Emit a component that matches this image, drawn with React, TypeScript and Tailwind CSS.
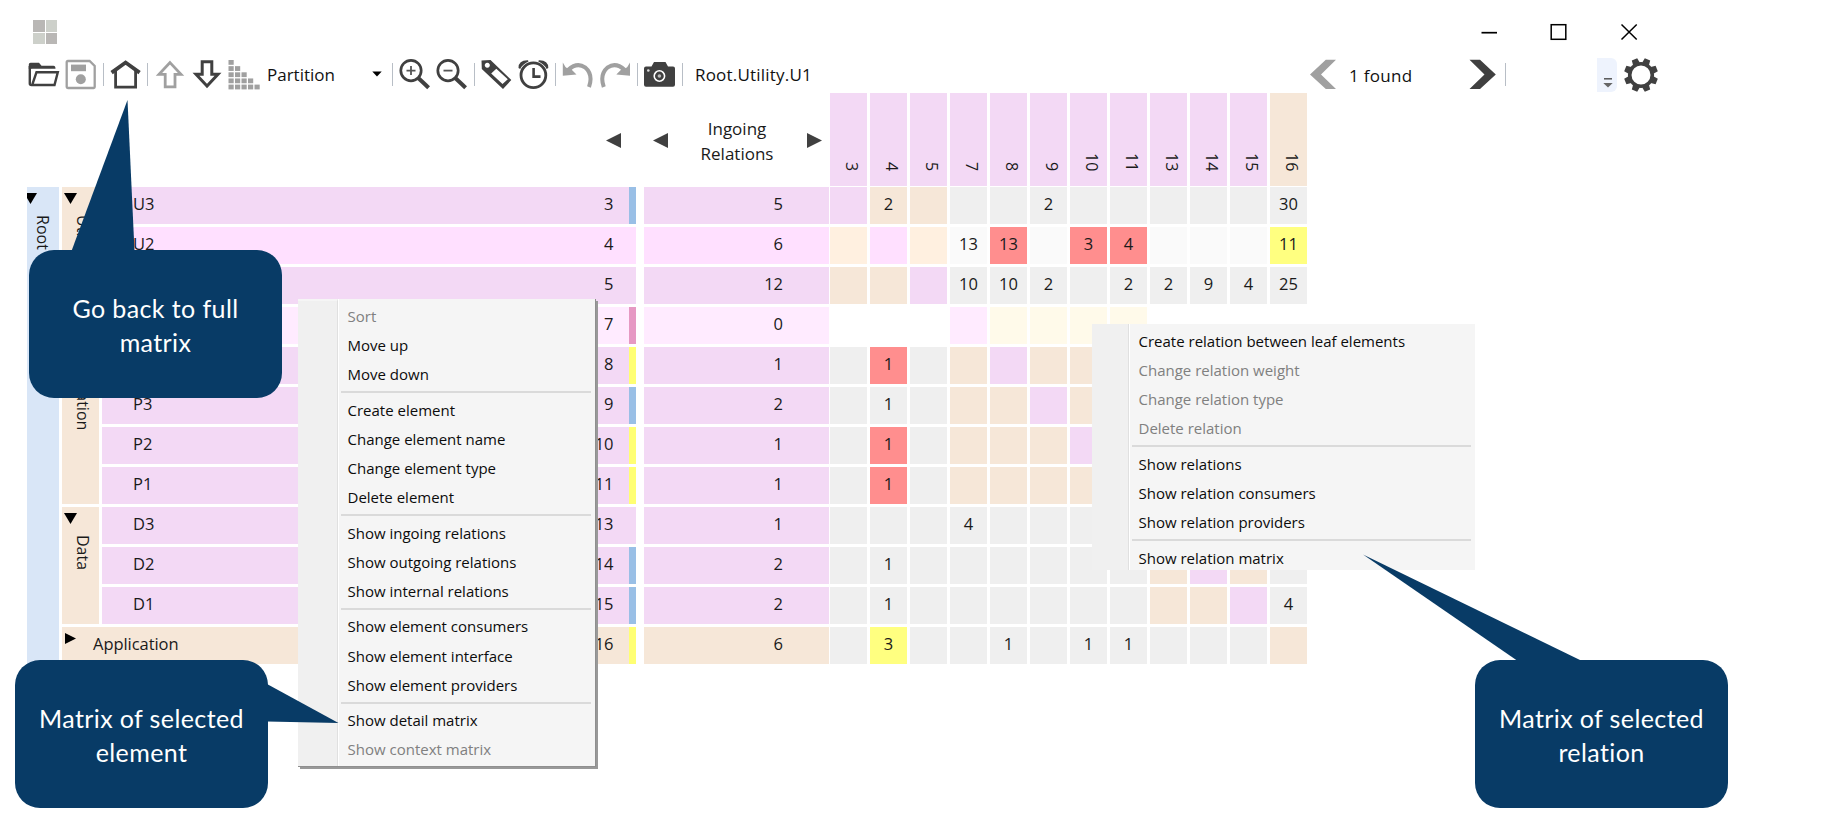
import type { ReactNode } from "react";
import clsx from "clsx";

const DARK = "#404040";
const DIM = "#a0a0a0";

const CELL: Record<string, string> = {
  p: "bg-[#f3d9f5]",
  b: "bg-[#f6e7d8]",
  g: "bg-[#efefef]",
  l: "bg-[#fafafa]",
  o: "bg-[#fff0e0]",
  m: "bg-[#ffe0ff]",
  k: "bg-[#ffebff]",
  c: "bg-[#fffaea]",
  w: "bg-white",
  r: "bg-[#ff8e8e]",
  y: "bg-[#ffff80]",
};

const MARK: Record<string, string> = {
  blue: "bg-[#99bfe6]",
  pink: "bg-[#e699c3]",
  yellow: "bg-[#ffff73]",
};

type Row = {
  name?: string;
  index: number;
  metric: number;
  tone: string;
  mark?: string;
  cells: string;
  values: Record<number, number>;
};

const COLUMNS = [3, 4, 5, 7, 8, 9, 10, 11, 13, 14, 15, 16];

const ROWS: Row[] = [
  { name: "U3", index: 3, metric: 5, tone: "p", mark: "blue", cells: "pbbggggggggg", values: { 4: 2, 9: 2, 16: 30 } },
  { name: "U2", index: 4, metric: 6, tone: "m", cells: "omolrlrrllly", values: { 7: 13, 8: 13, 10: 3, 11: 4, 16: 11 } },
  { index: 5, metric: 12, tone: "p", cells: "bbpggggggggg", values: { 7: 10, 8: 10, 9: 2, 11: 2, 13: 2, 14: 9, 15: 4, 16: 25 } },
  { index: 7, metric: 0, tone: "k", mark: "pink", cells: "wwwkccccwwww", values: {} },
  { index: 8, metric: 1, tone: "p", mark: "yellow", cells: "grgbpbbbgggg", values: { 4: 1 } },
  { name: "P3", index: 9, metric: 2, tone: "p", mark: "blue", cells: "gggbbpbbgggg", values: { 4: 1 } },
  { name: "P2", index: 10, metric: 1, tone: "p", mark: "yellow", cells: "grgbbbpbgggg", values: { 4: 1 } },
  { name: "P1", index: 11, metric: 1, tone: "p", mark: "yellow", cells: "grgbbbbpgggg", values: { 4: 1 } },
  { name: "D3", index: 13, metric: 1, tone: "p", cells: "ggggggggpbbg", values: { 7: 4 } },
  { name: "D2", index: 14, metric: 2, tone: "p", mark: "blue", cells: "ggggggggbpbg", values: { 4: 1, 16: 9 } },
  { name: "D1", index: 15, metric: 2, tone: "p", mark: "blue", cells: "ggggggggbbpg", values: { 4: 1, 16: 4 } },
  { name: "Application", index: 16, metric: 6, tone: "b", mark: "yellow", cells: "gygggggggggb", values: { 4: 3, 8: 1, 10: 1, 11: 1 } },
];

function Glyph({ className, children }: { className?: string; children: ReactNode }) {
  return (
    <svg viewBox="0 0 32 32" fill="none" className={clsx("size-8 shrink-0", className)}>
      {children}
    </svg>
  );
}

function Divider({ className }: { className: string }) {
  return <div className={clsx("h-[23px] w-px shrink-0 bg-[#b8bec6]", className)} />;
}

function TitleBar() {
  return (
    <div className="flex h-[58px] items-start">
      <div className="mt-5 ml-[33px] grid size-6 grid-cols-2 gap-px">
        <div className="bg-[#b9b7b5]" />
        <div className="bg-[#cdd0ca]" />
        <div className="bg-[#cdd0ca]" />
        <div className="bg-[#b9b7b5]" />
      </div>
      <svg viewBox="0 0 160 18" fill="none" stroke="#000" className="mt-[23px] ml-[1423px] h-[18px] w-[160px]">
        <path d="M1.5 9.7H17" strokeWidth="1.7" />
        <rect x="71.2" y="1.7" width="14.6" height="14.6" strokeWidth="1.5" />
        <path d="M141.5 1.5L156.7 16.5M156.7 1.5L141.5 16.5" strokeWidth="1.5" />
      </svg>
    </div>
  );
}

function ZoomGlyph({ plus, className }: { plus?: boolean; className: string }) {
  return (
    <Glyph className={className}>
      <circle cx="12" cy="12.6" r="10.2" stroke={DARK} strokeWidth="2.7" />
      <path d="M19.3 20L29.6 29.8" stroke={DARK} strokeWidth="4" />
      <path d={plus ? "M7.5 12.6H16.5M12 8.1V17.1" : "M7.5 12.6H16.5"} stroke="#555" strokeWidth="1.8" />
    </Glyph>
  );
}

function Toolbar() {
  const teeth = [22.5, 67.5, 112.5, 157.5, 202.5, 247.5, 292.5, 337.5];
  return (
    <div className="flex h-[35px] items-start text-[17px] leading-[34px] text-[#111]">
      <Glyph className="ml-7">
        <path d="M0.8 11V6.6Q0.8 4.8 2.6 4.8H11L13.5 7.7H25.5Q27.5 7.7 27.5 10.8H5Z" fill={DARK} />
        <path d="M1.8 8V25.5Q1.8 27 3.5 27H26.5L29.8 14.2H8.5L4.5 26" stroke={DARK} strokeWidth="2.4" />
      </Glyph>
      <Glyph className="ml-[5px]">
        <path d="M1.7 4.2Q1.7 3 2.9 3H24.6L29.7 8V29Q29.7 30 28.7 30H2.9Q1.7 30 1.7 29Z" stroke={DIM} strokeWidth="2.3" />
        <rect x="6" y="6.6" width="15" height="6.6" fill={DIM} />
        <circle cx="15.8" cy="21.3" r="5" fill={DIM} />
      </Glyph>
      <Divider className="mt-[5px] ml-[6px]" />
      <Glyph className="ml-[6px]">
        <path d="M1.6 14.6L15.6 4.5L29.6 14.6" stroke={DARK} strokeWidth="3.8" />
        <path d="M5.6 13V29.2H25.6V13" stroke={DARK} strokeWidth="2.8" />
      </Glyph>
      <Divider className="mt-[5px] ml-[5px]" />
      <Glyph className="ml-[7px]">
        <path d="M15 4.6L26 16.3H20V28.9H10.2V16.3H4Z" stroke={DIM} strokeWidth="2.8" />
      </Glyph>
      <Glyph className="ml-[5px]">
        <path d="M15 28L4 16.3H10.2V3.7H19.8V16.3H26Z" stroke={DARK} strokeWidth="3" />
      </Glyph>
      <Glyph className="ml-[4px]">
        {[0, 1, 2, 3, 4].map((r) =>
          Array.from({ length: r + 1 }, (_, c) => (
            <rect key={`${r}-${c}`} x={0.5 + c * 6.5} y={2 + r * 6.15} width="5.2" height="4.8" fill={DIM} />
          )),
        )}
      </Glyph>
      <span className="ml-[7px] w-[105px]">Partition</span>
      <svg viewBox="0 0 10 6" className="mt-[13px] h-[6px] w-[10px]">
        <path d="M0.3 0.5H9.7L5 5.5Z" fill="#000" />
      </svg>
      <Divider className="mt-[5px] ml-[10px]" />
      <ZoomGlyph plus className="ml-[6px]" />
      <ZoomGlyph className="ml-[5px]" />
      <Divider className="mt-[5px] ml-[6px]" />
      <Glyph className="ml-[6px]">
        <path
          d="M0.5 2.5L9.5 2L30.3 22L22 31L0.8 11ZM6.3 4.8A2.5 2.5 0 1 0 6.31 4.8ZM10.2 15.5L21.5 26L26.8 21.3L15.3 10.8Z"
          fill={DARK}
          fillRule="evenodd"
        />
      </Glyph>
      <Glyph className="ml-[5px]">
        <circle cx="15.4" cy="17.2" r="12.4" stroke={DARK} strokeWidth="2.8" />
        <path d="M15.6 10V18.6H22.5" stroke={DARK} strokeWidth="2.6" />
        <path d="M0.5 10Q0.5 2 10 2.3L10.5 3.5Q4.5 6 2.2 11Z" fill={DARK} />
        <path d="M30.3 10Q30.3 2 20.8 2.3L20.3 3.5Q26.3 6 28.6 11Z" fill={DARK} />
      </Glyph>
      <Divider className="mt-[5px] ml-[5px]" />
      <Glyph className="ml-[6px]">
        <path d="M0.8 4.5L3.5 9L5.5 10.5Q9.5 7 14 7.2L9.5 11.5L14.5 16.5L0.8 17.7Z" fill={DIM} />
        <path d="M6 12Q15 3.8 23 9.3Q31.5 16.5 27 29" stroke={DIM} strokeWidth="4" />
      </Glyph>
      <Glyph className="ml-[5px]">
        <path d="M31 4.5L28.3 9L26.3 10.5Q22.3 7 17.8 7.2L22.3 11.5L17.3 16.5L31 17.7Z" fill={DIM} />
        <path d="M25.8 12Q16.8 3.8 8.8 9.3Q0.3 16.5 4.8 29" stroke={DIM} strokeWidth="4" />
      </Glyph>
      <Divider className="mt-[5px] ml-[6px]" />
      <Glyph className="ml-[6px]">
        <path d="M2 8.5H7.5L10 4H21.5L24 8.5H29Q31 8.5 31 10.5V26.7Q31 28.7 29 28.7H2Q0 28.7 0 26.7V10.5Q0 8.5 2 8.5Z" fill={DARK} />
        <circle cx="15.4" cy="18" r="5.2" stroke="#fff" strokeWidth="1.6" />
        <circle cx="15.4" cy="18" r="1.8" fill="#bbb" />
        <circle cx="4.3" cy="12.5" r="1.3" fill="#ddd" />
      </Glyph>
      <Divider className="mt-[5px] ml-[6px]" />
      <span className="ml-[12px] w-[615px] tracking-[0.2px]">Root.Utility.U1</span>
      <Glyph>
        <path d="M26 1.8H15.8L0 16.4L15.8 31H26L11 16.4Z" fill={DIM} />
      </Glyph>
      <span className="ml-[7px] w-[120px] pt-px tracking-[0.3px]">1 found</span>
      <Glyph>
        <path d="M0.5 1.8H11L26.8 16.4L11 31H0.5L15.5 16.4Z" fill={DARK} />
      </Glyph>
      <Divider className="mt-[5px] ml-[4px]" />
      <div className="ml-[91px] flex h-[34px] w-5 flex-col items-center rounded-r-md bg-[#eef3fd] pt-5 pl-[2px]">
        <svg viewBox="0 0 10 10" className="h-[10px] w-[10px]">
          <path d="M1 0.8H9" stroke="#555" strokeWidth="1.5" />
          <path d="M0.3 5H9.7L5 9.5Z" fill="#666" />
        </svg>
      </div>
      <svg viewBox="-17 -17 34 34" className="ml-[7px] size-[34px]">
        <circle r="11.3" fill="none" stroke={DARK} strokeWidth="3.6" />
        {teeth.map((a) => (
          <path key={a} d="M-3.6 -12L-2.9 -17H2.9L3.6 -12Z" fill={DARK} transform={`rotate(${a})`} />
        ))}
      </svg>
    </div>
  );
}

function Arrow({ dir, className }: { dir: "left" | "right" | "down"; className?: string }) {
  const d = { left: "M15 0V15L0 7.5Z", right: "M0 0V15L15 7.5Z", down: "M0 0H15L7.5 15Z" }[dir];
  return (
    <svg viewBox="0 0 15 15" preserveAspectRatio="none" className={clsx("shrink-0", className)}>
      <path d={d} fill="currentColor" />
    </svg>
  );
}

function Branch({ label, height }: { label: string; height: string }) {
  return (
    <div className={clsx("flex w-[37px] flex-col items-start bg-[#f6e7d8]", height)}>
      <Arrow dir="down" className="mt-[6px] ml-[2px] h-[11px] w-[13px] text-black" />
      <span className="mt-[11px] ml-[9px] text-[16px] leading-6 [writing-mode:vertical-rl]">{label}</span>
    </div>
  );
}

function LeafRow({ row }: { row: Row }) {
  return (
    <div className={clsx("flex h-[37px] w-[534px]", CELL[row.tone])}>
      <span className="ml-[31px] flex-1">{row.name}</span>
      <span className="pr-[15px]">{row.index}</span>
      <div className={clsx("w-[7.5px]", row.mark && MARK[row.mark])} />
    </div>
  );
}

function Tree() {
  const app = ROWS[11];
  return (
    <div className="flex gap-[3px]">
      <div className="flex h-[477px] w-8 flex-col items-start overflow-hidden bg-[#d9e6f7]">
        <Arrow dir="down" className="mt-[6px] -ml-[3px] h-[11px] w-[13px] text-black" />
        <span className="mt-[11px] ml-1 text-[16px] leading-6 [writing-mode:vertical-rl]">Root</span>
      </div>
      <div className="flex flex-col gap-[3px]">
        <div className="flex gap-[3px]">
          <div className="flex flex-col gap-[3px]">
            <Branch label="Utility" height="h-[117px]" />
            <Branch label="Presentation" height="h-[197px]" />
            <Branch label="Data" height="h-[117px]" />
          </div>
          <div className="flex flex-col gap-[3px]">
            {ROWS.slice(0, 11).map((r) => (
              <LeafRow key={r.index} row={r} />
            ))}
          </div>
        </div>
        <div className="flex h-[37px] bg-[#f6e7d8]">
          <Arrow dir="right" className="mt-[6px] ml-[3px] h-[11px] w-[11px] text-black" />
          <span className="ml-[17px] flex-1 tracking-[-0.05px]">{app.name}</span>
          <span className="pr-[15px]">{app.index}</span>
          <div className="w-[7.5px] bg-[#ffff73]" />
        </div>
      </div>
    </div>
  );
}

function Matrix() {
  return (
    <div className="text-[16.5px] leading-[34px] text-[#1a1a1a]">
      <div className="flex h-[94px]">
        <div className="flex w-[644px] justify-end pt-[40px] pr-[23px]">
          <Arrow dir="left" className="size-[15px] text-[#404040]" />
        </div>
        <div className="flex w-[186px] items-start">
          <Arrow dir="left" className="mt-[40px] ml-[9px] size-[15px] text-[#404040]" />
          <div className="mt-[24px] flex-1 pr-px text-center text-[17px] leading-[24.5px]">
            Ingoing
            <br />
            Relations
          </div>
          <Arrow dir="right" className="mt-[40px] mr-[8px] size-[15px] text-[#404040]" />
        </div>
        <div className="flex gap-[3px]">
          {COLUMNS.map((c) => (
            <div key={c} className={clsx("flex h-[93px] w-[37px] items-end justify-center pb-[15px] pl-[6px]", c === 16 ? CELL.b : CELL.p)}>
              <span className="text-[16px] leading-6 [writing-mode:vertical-rl]">{c}</span>
            </div>
          ))}
        </div>
      </div>
      <div className="ml-[27px] flex">
        <Tree />
        <div className="ml-2 flex flex-col gap-[3px]">
          {ROWS.map((r) => (
            <div key={r.index} className="flex h-[37px]">
              <div className={clsx("mr-px w-[185px] pr-[46px] text-right", CELL[r.tone])}>{r.metric}</div>
              <div className="flex gap-[3px]">
                {COLUMNS.map((c, i) => (
                  <div key={c} className={clsx("w-[37px] text-center", CELL[r.cells[i]])}>
                    {r.values[c]}
                  </div>
                ))}
              </div>
            </div>
          ))}
        </div>
      </div>
    </div>
  );
}

type Item = { text: string; off?: boolean };

function MenuItems({ groups }: { groups: Item[][] }) {
  return (
    <>
      {groups.map((g, i) => (
        <div key={i}>
          {i > 0 && <div className="mt-[2px] mb-[2.5px] h-[2px] bg-[#dadada]" />}
          {g.map((t) => (
            <div
              key={t.text}
              className={clsx(
                "h-[29.1px] pl-[6.5px] text-[15px] leading-[29px] whitespace-nowrap",
                t.off ? "text-[#808080]" : "text-[#0c0c0c]",
              )}
            >
              {t.text}
            </div>
          ))}
        </div>
      ))}
    </>
  );
}

const ELEMENT_MENU: Item[][] = [
  [{ text: "Sort", off: true }, { text: "Move up" }, { text: "Move down" }],
  [{ text: "Create element" }, { text: "Change element name" }, { text: "Change element type" }, { text: "Delete element" }],
  [{ text: "Show ingoing relations" }, { text: "Show outgoing relations" }, { text: "Show internal relations" }],
  [{ text: "Show element consumers" }, { text: "Show element interface" }, { text: "Show element providers" }],
  [{ text: "Show detail matrix" }, { text: "Show context matrix", off: true }],
];

const RELATION_MENU: Item[][] = [
  [
    { text: "Create relation between leaf elements" },
    { text: "Change relation weight", off: true },
    { text: "Change relation type", off: true },
    { text: "Delete relation", off: true },
  ],
  [{ text: "Show relations" }, { text: "Show relation consumers" }, { text: "Show relation providers" }],
  [{ text: "Show relation matrix" }],
];

function Callout({ lines, className }: { lines: string[]; className: string }) {
  return (
    <div
      className={clsx(
        "absolute flex h-[148px] w-[253px] flex-col items-center justify-center rounded-[25px] bg-[#083b66] pt-px text-center font-['Lato','Open_Sans',sans-serif] text-[25px] leading-[34px] tracking-[0.4px] text-white",
        className,
      )}
    >
      {lines.map((l) => (
        <div key={l}>{l}</div>
      ))}
    </div>
  );
}

export default function App() {
  return (
    <div className="relative h-[835px] w-[1830px] overflow-hidden bg-white font-['Open_Sans','Noto_Sans',sans-serif]">
      <TitleBar />
      <Toolbar />
      <Matrix />

      <div className="absolute top-[299px] left-[298px] flex h-[468px] w-[298px] border-r border-b border-[#8f8f8f] bg-[#f5f5f5] shadow-[2px_2px_0_0_#999]">
        <div className="w-[40px] border-t-2 border-r border-t-[#f5f5f5] border-r-[#e0e0e0] bg-[#f0f0f0]" />
        <div className="flex-1 border-l border-white pt-[3px] pr-[4px] pl-[2px]">
          <MenuItems groups={ELEMENT_MENU} />
        </div>
      </div>

      <div className="absolute top-[324px] left-[1092px] flex h-[246px] w-[383px] overflow-hidden bg-[#f5f5f5]">
        <div className="w-[37px] shrink-0 border-r border-[#e0e0e0] bg-[#f0f0f0]" />
        <div className="flex-1 border-l border-white pt-[3px] pr-[4px] pl-[2px]">
          <MenuItems groups={RELATION_MENU} />
        </div>
      </div>

      <svg viewBox="0 0 1830 835" fill="#083b66" className="absolute inset-0 h-[835px] w-[1830px]">
        <path d="M127.5 100L71.5 251H134.5Z" />
        <path d="M338.5 723L267 684V721.5Z" />
        <path d="M1363 554.5L1517 660.5H1581Z" />
      </svg>
      <Callout className="top-[250px] left-[29px]" lines={["Go back to full", "matrix"]} />
      <Callout className="top-[660px] left-[15px]" lines={["Matrix of selected", "element"]} />
      <Callout className="top-[660px] left-[1475px]" lines={["Matrix of selected", "relation"]} />
    </div>
  );
}
